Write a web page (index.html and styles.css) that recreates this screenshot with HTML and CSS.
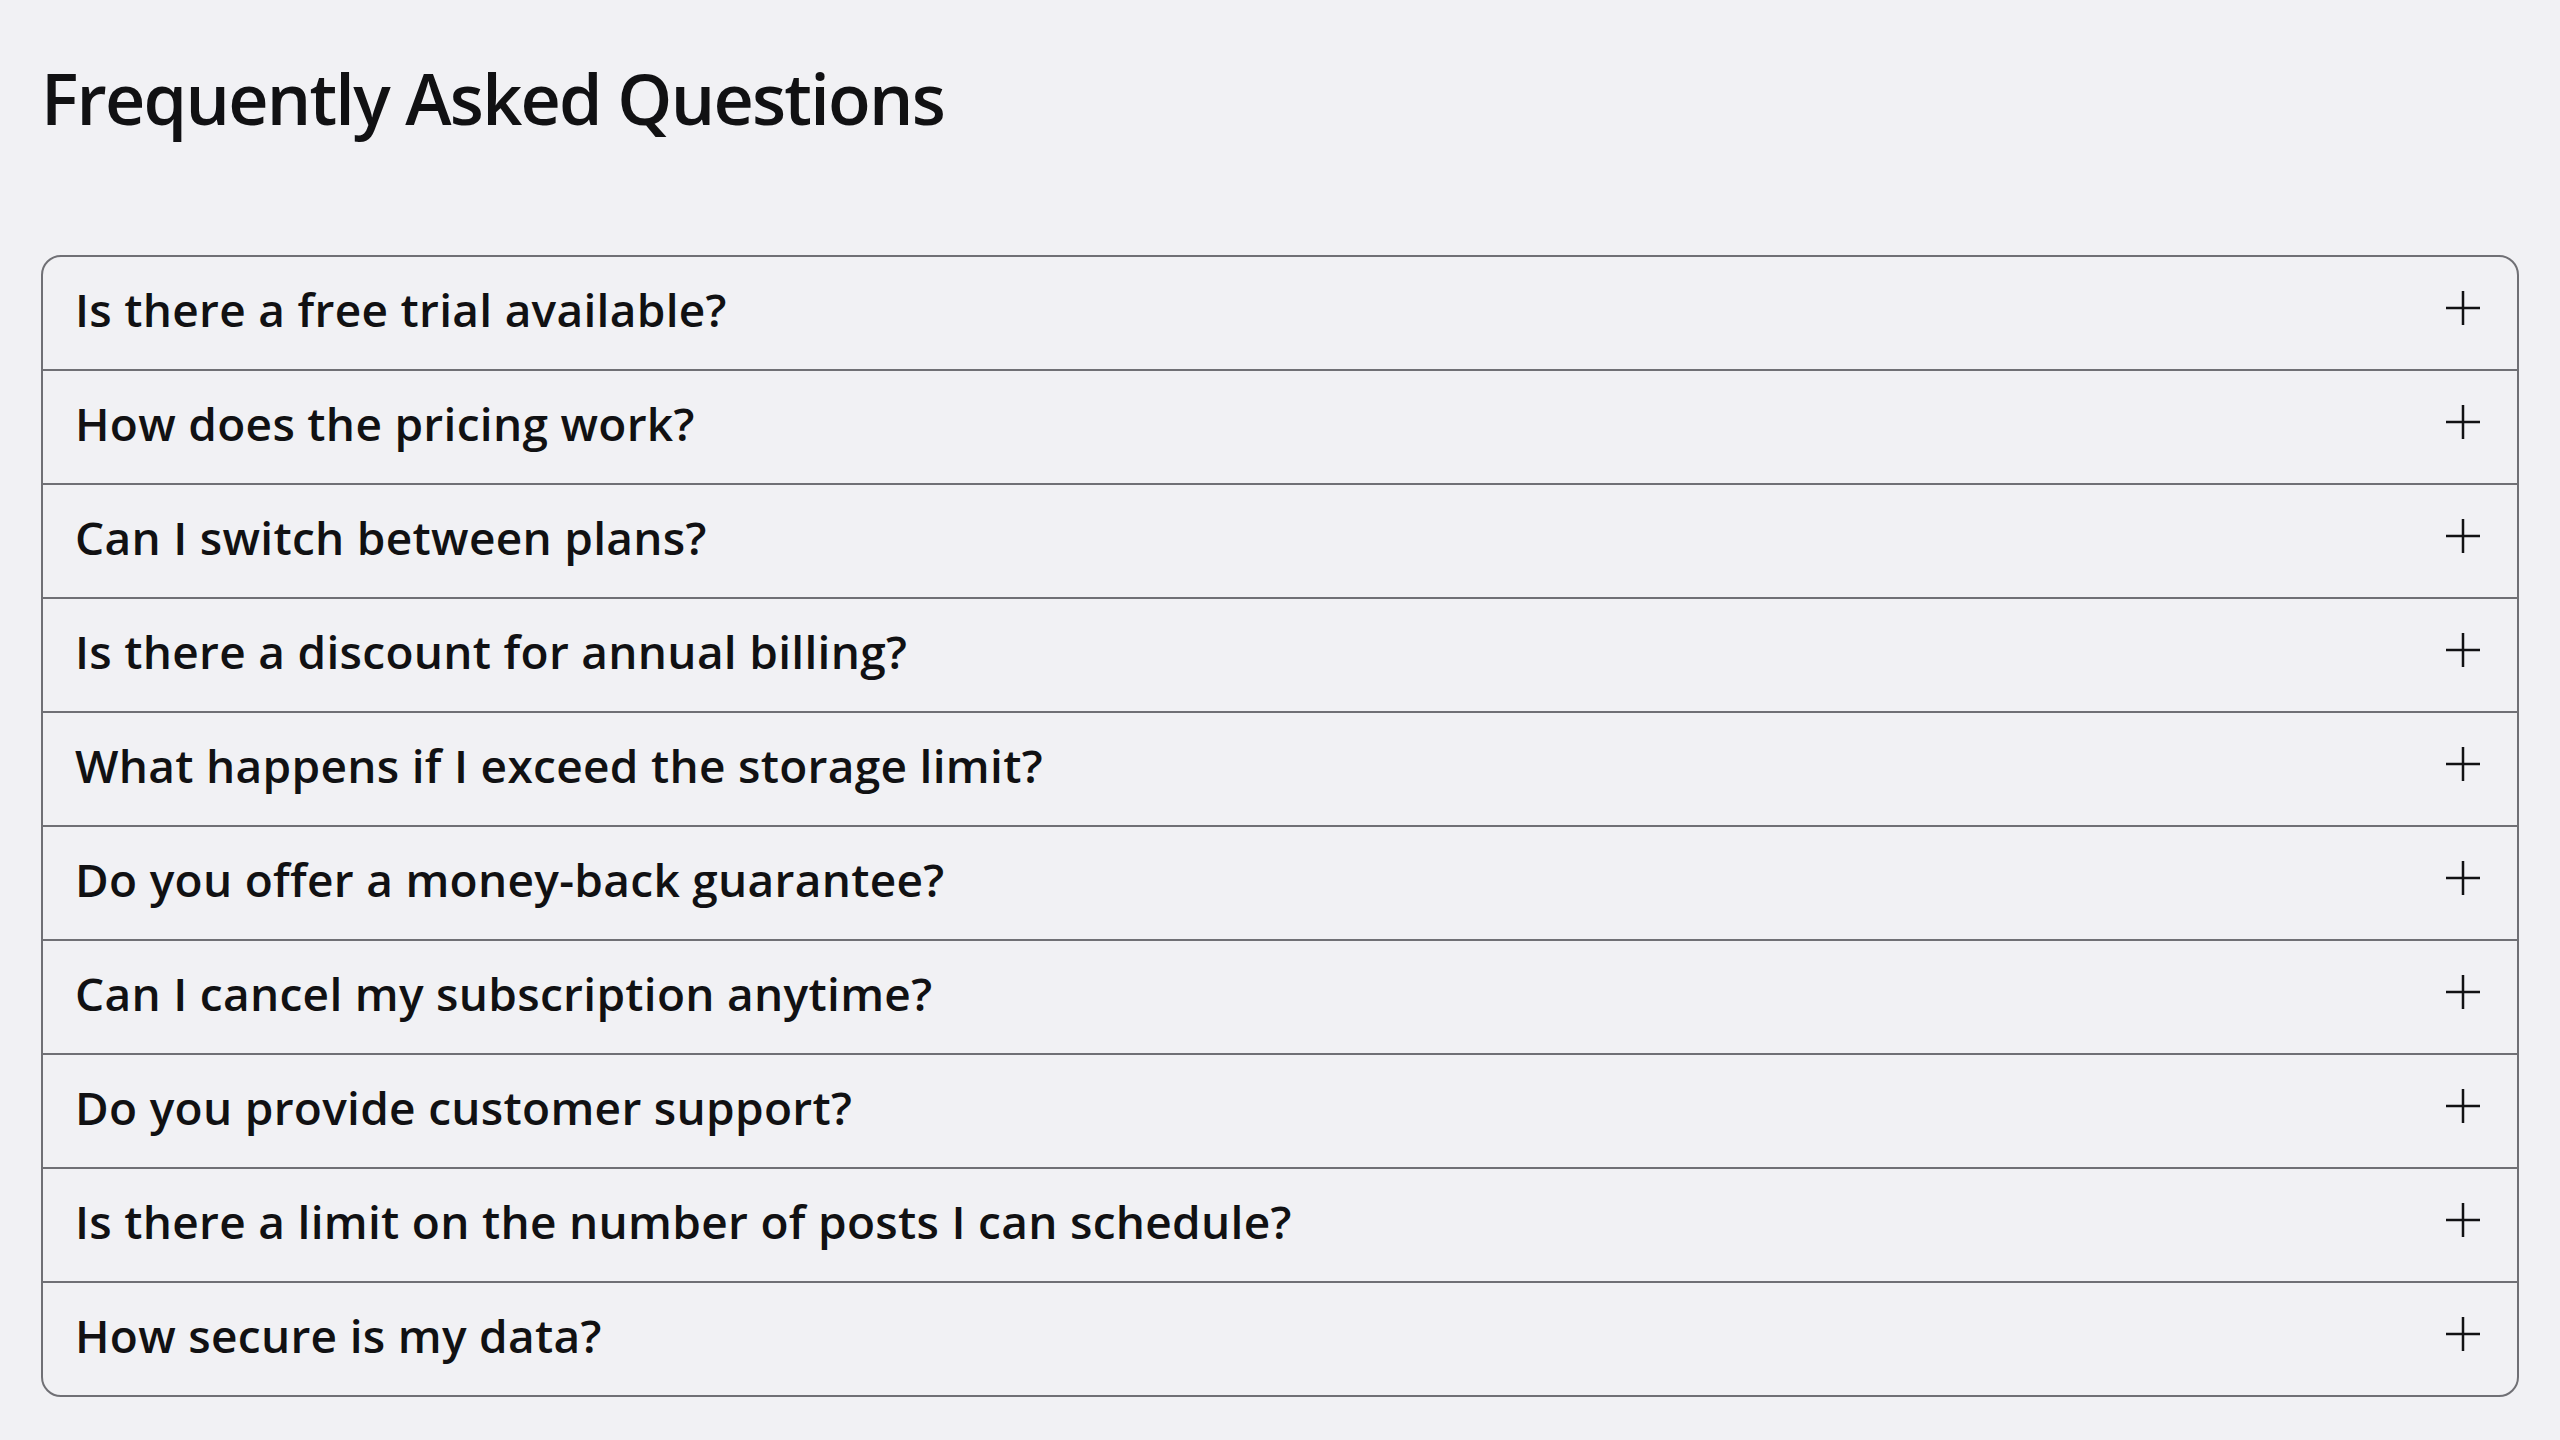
FILE: index.html
```html
<!DOCTYPE html>
<html lang="en">
<head>
<meta charset="utf-8">
<title>Frequently Asked Questions</title>
<link rel="stylesheet" href="styles.css">
</head>
<body>
<main class="page">
  <h1 class="title">Frequently Asked Questions</h1>
  <section class="faq">
    <div class="faq-item"><span class="q">Is there a free trial available?</span><svg class="plus" viewBox="0 0 34 34"><path d="M0 17H34M17 0V34"/></svg></div>
    <div class="faq-item"><span class="q">How does the pricing work?</span><svg class="plus" viewBox="0 0 34 34"><path d="M0 17H34M17 0V34"/></svg></div>
    <div class="faq-item"><span class="q">Can I switch between plans?</span><svg class="plus" viewBox="0 0 34 34"><path d="M0 17H34M17 0V34"/></svg></div>
    <div class="faq-item"><span class="q">Is there a discount for annual billing?</span><svg class="plus" viewBox="0 0 34 34"><path d="M0 17H34M17 0V34"/></svg></div>
    <div class="faq-item"><span class="q">What happens if I exceed the storage limit?</span><svg class="plus" viewBox="0 0 34 34"><path d="M0 17H34M17 0V34"/></svg></div>
    <div class="faq-item"><span class="q">Do you offer a money-back guarantee?</span><svg class="plus" viewBox="0 0 34 34"><path d="M0 17H34M17 0V34"/></svg></div>
    <div class="faq-item"><span class="q">Can I cancel my subscription anytime?</span><svg class="plus" viewBox="0 0 34 34"><path d="M0 17H34M17 0V34"/></svg></div>
    <div class="faq-item"><span class="q">Do you provide customer support?</span><svg class="plus" viewBox="0 0 34 34"><path d="M0 17H34M17 0V34"/></svg></div>
    <div class="faq-item"><span class="q">Is there a limit on the number of posts I can schedule?</span><svg class="plus" viewBox="0 0 34 34"><path d="M0 17H34M17 0V34"/></svg></div>
    <div class="faq-item"><span class="q">How secure is my data?</span><svg class="plus" viewBox="0 0 34 34"><path d="M0 17H34M17 0V34"/></svg></div>
  </section>
</main>
</body>
</html>
```
FILE: styles.css
```css
html, body {
  margin: 0;
  padding: 0;
  background: #f1f1f4;
}
body {
  font-family: "Open Sans", Lato, sans-serif;
  color: #111113;
}
.page {
  padding: 56px 41px 40px;
}
.title {
  margin: 0 0 115px;
  font-size: 70px;
  line-height: 1.2;
  font-weight: 600;
  letter-spacing: -1.75px;
  color: #111113;
}
.faq {
  border: 2px solid #707075;
  border-radius: 20px;
  display: flex;
  flex-direction: column;
}
.faq-item {
  height: 114px;
  box-sizing: border-box;
  padding: 0 37px 6px 32px;
  display: flex;
  align-items: center;
  justify-content: space-between;
  border-bottom: 2px solid #707075;
}
.faq-item:last-child {
  border-bottom: none;
  height: 112px;
}
.q {
  font-size: 46px;
  line-height: 1.2;
  font-weight: 600;
  letter-spacing: 0.3px;
}
.plus {
  width: 34px;
  height: 34px;
  flex: none;
  margin-bottom: 4px;
  stroke: #111113;
  stroke-width: 2.5;
  fill: none;
}
```
